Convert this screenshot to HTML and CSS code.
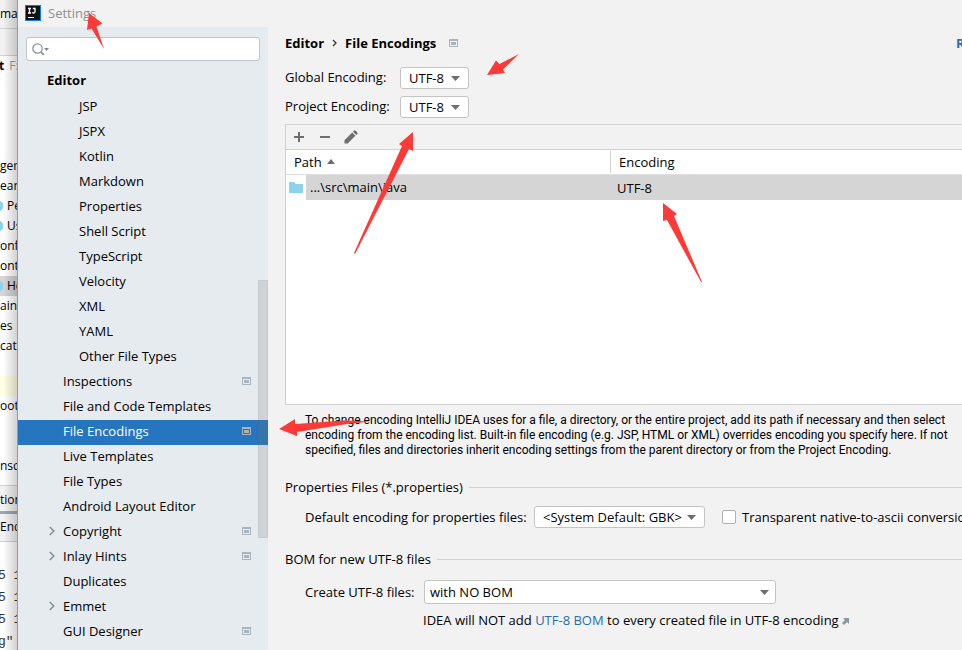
FILE: index.html
```html
<!DOCTYPE html>
<html lang="en">
<head>
<meta charset="utf-8">
<title>Settings</title>
<link rel="stylesheet" href="styles.css">
</head>
<body>
<svg class="defs" aria-hidden="true">
  <symbol id="scope" viewBox="0 0 9 8"><path fill="#a9b5bd" fill-rule="evenodd" d="M0 0h9v8H0zM1 2v5h7V2zM2 3h5v3H2z"/></symbol>
  <symbol id="chevron" viewBox="0 0 6 10"><path fill="none" stroke="#8a8d90" stroke-width="1.5" d="M.8 1l4 4-4 4"/></symbol>
  <symbol id="down" viewBox="0 0 9 5"><path fill="#6e6e6e" d="M0 0h9L4.500 5z"/></symbol>
</svg>
<div class="desktop">
  <aside class="ide">
    <div class="ide-menu">mai</div>
    <div class="ide-nav"></div>
    <div class="ide-project"><b>t</b><span>F:</span></div>
    <ul class="ide-tree">
      <li>ger</li>
      <li>ean</li>
      <li class="cls">Pe</li>
      <li class="cls">Us</li>
      <li>onfi</li>
      <li>ontr</li>
      <li class="cls current">He</li>
      <li>ain</li>
      <li>es</li>
      <li>cat</li>
      <li></li>
      <li class="marked"></li>
      <li>oot.</li>
      <li></li>
      <li></li>
      <li>nsc</li>
    </ul>
    <div class="ide-tab">tion</div>
    <div class="ide-tool">End</div>
    <pre class="ide-log">5 1
5 1
5 1
g"</pre>
  </aside>
  <div class="dialog">
    <header class="titlebar">
      <svg width="16" height="16" viewBox="0 0 16 16"><path fill="#087cfa" d="M0 0h16v16H0z"/><path fill="#111" d="M1 1h14v14H1z"/><path fill="none" stroke="#fff" stroke-width="1.300" d="M3 3.500h3M4.500 3.500v4.500M3 8h3M7.800 3.500H10v3q0 1.500-1.300 1.500-.8 0-1.400-.7"/><path fill="#fff" d="M3 12h6v1H3z"/></svg>
      <span>Settings</span>
    </header>
    <div class="body">
      <nav class="sidebar">
        <label class="search">
          <svg width="17" height="13" viewBox="0 0 17 13"><circle cx="5.500" cy="5.500" r="4.700" fill="none" stroke="#8c959b" stroke-width="1.300"/><path stroke="#8c959b" stroke-width="1.800" d="M8.800 8.800l3 3"/><path fill="#7f8b91" d="M12 5h5l-2.500 3z"/></svg>
          <input type="text" aria-label="Search settings">
        </label>
        <h2>Editor</h2>
        <ul class="tree">
          <li class="sub">JSP</li>
          <li class="sub">JSPX</li>
          <li class="sub">Kotlin</li>
          <li class="sub">Markdown</li>
          <li class="sub">Properties</li>
          <li class="sub">Shell Script</li>
          <li class="sub">TypeScript</li>
          <li class="sub">Velocity</li>
          <li class="sub">XML</li>
          <li class="sub">YAML</li>
          <li class="sub">Other File Types</li>
          <li>Inspections<svg class="scope"><use href="#scope"/></svg></li>
          <li>File and Code Templates</li>
          <li class="selected">File Encodings<svg class="scope"><use href="#scope"/></svg></li>
          <li>Live Templates</li>
          <li>File Types</li>
          <li>Android Layout Editor</li>
          <li class="folded"><svg class="chevron"><use href="#chevron"/></svg>Copyright<svg class="scope"><use href="#scope"/></svg></li>
          <li class="folded"><svg class="chevron"><use href="#chevron"/></svg>Inlay Hints<svg class="scope"><use href="#scope"/></svg></li>
          <li>Duplicates</li>
          <li class="folded"><svg class="chevron"><use href="#chevron"/></svg>Emmet</li>
          <li>GUI Designer<svg class="scope"><use href="#scope"/></svg></li>
        </ul>
        <div class="thumb"></div>
      </nav>
      <main class="page">
        <div class="crumbs">
          <b>Editor</b>
          <svg width="5" height="8" viewBox="0 0 5 8"><path fill="none" stroke="#333" stroke-width="1.300" d="M1 1l3 3-3 3"/></svg>
          <b>File Encodings</b>
          <svg class="scope"><use href="#scope"/></svg>
          <a class="reset" href="#">Reset</a>
        </div>
        <div class="field">
          <label for="global">Global Encoding:</label>
          <span class="combo small"><select id="global"><option>UTF-8</option></select><svg><use href="#down"/></svg></span>
        </div>
        <div class="field">
          <label for="project">Project Encoding:</label>
          <span class="combo small"><select id="project"><option>UTF-8</option></select><svg><use href="#down"/></svg></span>
        </div>
        <section class="panel">
          <div class="toolbar">
            <button aria-label="Add"><svg width="14" height="14" viewBox="0 0 14 14"><path stroke="#6e6e6e" stroke-width="2" d="M7 2v10M2 7h10"/></svg></button>
            <button aria-label="Remove"><svg width="14" height="14" viewBox="0 0 14 14"><path stroke="#6e6e6e" stroke-width="2" d="M2 7h10"/></svg></button>
            <button aria-label="Edit"><svg width="14" height="14" viewBox="0 0 14 14"><path fill="#6e6e6e" d="M.5 13.500v-3.300L8.200 2.600l3.200 3.200-7.700 7.700zM9 1.800L10.200.6q.6-.6 1.200 0l2 2q.6.6 0 1.200L12.200 5z"/></svg></button>
          </div>
          <table>
            <thead><tr><th class="path">Path <svg width="8" height="5" viewBox="0 0 8 5"><path fill="#6e6e6e" d="M0 5h8L4 0z"/></svg></th><th><span>Encoding</span></th></tr></thead>
            <tbody><tr><td class="path"><div><svg width="14" height="11" viewBox="0 0 14 11"><path fill="#8dd3ec" d="M0 0h5l2 2h7v9H0z"/></svg><span>...\src\main\java</span></div></td><td>UTF-8</td></tr></tbody>
          </table>
        </section>
        <p class="help">To change encoding IntelliJ IDEA uses for a file, a directory, or the entire project, add its path if necessary and then select<br>encoding from the encoding list. Built-in file encoding (e.g. JSP, HTML or XML) overrides encoding you specify here. If not<br>specified, files and directories inherit encoding settings from the parent directory or from the Project Encoding.</p>
        <h3>Properties Files (*.properties)</h3>
        <div class="row">
          <label class="default-label" for="props">Default encoding for properties files:</label>
          <span class="combo medium"><select id="props"><option>&lt;System Default: GBK&gt;</option></select><svg><use href="#down"/></svg></span>
          <input class="check" type="checkbox" id="ascii"><label for="ascii">Transparent native-to-ascii conversion</label>
        </div>
        <h3>BOM for new UTF-8 files</h3>
        <div class="row bom">
          <label class="bom-label" for="bom">Create UTF-8 files:</label>
          <span class="combo large"><select id="bom"><option>with NO BOM</option></select><svg><use href="#down"/></svg></span>
        </div>
        <p class="hint">IDEA will NOT add <a href="#">UTF-8 BOM</a> to every created file in UTF-8 encoding <svg width="7" height="7" viewBox="0 0 7 7"><path fill="#8a979f" d="M1 0h6v6L5 4 2 7 0 5l3-3z"/></svg></p>
      </main>
    </div>
  </div>
</div>
<svg class="arrows" width="720" height="450" viewBox="0 0 720 450" aria-hidden="true">
  <path d="M89 13l13.500 10.500-6 3L104 49 91.500 28.500 87 30z"/>
  <path d="M487 75l9-14.500 3.500 3.500L519 54l-16 15.500 2 3.500z"/>
  <path d="M413 132v19l-4-2-54 105-1-1 48-107-3-2z"/>
  <path d="M663 203l14 11-3 2 28 66-1 0-34-62-4 1z"/>
  <path d="M279 429l16-10v5l50-3.500 26 1-24 2.500-50 8v4z"/>
</svg>
</body>
</html>
```
FILE: styles.css
```css
* { box-sizing: border-box; }
body {
  margin: 0;
  background: #f2f2f2;
  color: #000;
  font: 13px/16px "Open Sans", "Noto Sans", sans-serif;
}
ul { margin: 0; padding: 0; list-style: none; }
a { color: #2470b3; text-decoration: none; }
svg { flex: none; }
.defs { position: absolute; width: 0; height: 0; }
.desktop { position: relative; display: grid; grid-template-columns: 18px minmax(0, 1fr); height: 100vh; overflow: hidden; }

.ide { position: relative; overflow: hidden; background: #fff; border-right: 1px solid #9b9b9b; white-space: nowrap; font-size: 12px; }
.ide::after { content: ""; position: absolute; inset: 0; background: linear-gradient(to right, transparent 20%, rgba(0, 0, 0, .18)); }
.ide-menu { height: 29px; padding-top: 6px; background: #f2f2f2; border-bottom: 1px solid #d1d1d1; }
.ide-nav { height: 27px; background: #f2f2f2; border-bottom: 1px solid #d1d1d1; }
.ide-project { display: flex; gap: 5px; height: 100px; color: #999; line-height: 20px; margin-left: -1px; }
.ide-project b { color: #000; }
.ide-tree li { height: 20px; line-height: 20px; }
.ide-tree .cls { padding-left: 7px; background: radial-gradient(circle at -4px 10px, #8cd3ee 7px, transparent 7px); }
.ide-tree .current { background-color: #d5d5d5; }
.ide-tree .marked { background: #ffffe4; }
.ide-tab { height: 29px; margin-top: 9px; line-height: 28px; background: #f2f2f2; border-top: 1px solid #d1d1d1; border-bottom: 3px solid #9aa7b8; }
.ide-tool { height: 28px; line-height: 26px; background: #f2f2f2; border-bottom: 1px solid #d1d1d1; }
.ide-log { margin: 23px 0 0 -2px; color: #333; font: 13px/22px "Liberation Mono", monospace; }

.dialog { display: flex; flex-direction: column; min-width: 0; min-height: 0; background: #f2f2f2; }
.titlebar { display: flex; align-items: center; gap: 7px; height: 27px; padding: 0 0 2px 7px; color: #8f8f8f; flex: none; }
.body { display: flex; flex: 1; min-height: 0; }
.sidebar { position: relative; flex: none; width: 250px; padding-top: 10px; background: #e6ebef; overflow: hidden; }
.search { display: flex; align-items: center; gap: 4px; height: 24px; margin: 0 8px; padding: 0 5px; background: #fff; border: 1px solid #c4c4c4; border-radius: 3px; }
.search input { flex: 1; min-width: 0; border: 0; outline: 0; background: none; font: inherit; }
h2 { margin: 6px 0 0; padding-left: 29px; height: 28px; font-size: 13px; line-height: 26px; }
.tree li { display: flex; align-items: center; height: 25px; padding: 0 17px 3px 45px; }
.tree .sub { padding-left: 61px; }
.tree .folded { padding-left: 31px; }
.tree .selected { background: #2675bf; color: #fff; }
.scope { width: 9px; height: 8px; }
.tree .scope { margin-left: auto; }
.chevron { width: 6px; height: 10px; margin-right: 8px; }
.thumb { position: absolute; right: 0; top: 253px; width: 10px; height: 258px; background: rgba(115, 115, 115, .2); border: 1px solid rgba(89, 89, 89, .06); }

.page { flex: 1; min-width: 0; padding: 8px 0 0 17px; overflow: hidden; white-space: nowrap; }
.crumbs { display: flex; align-items: center; gap: 8px; height: 16px; margin-bottom: 16px; }
.crumbs .scope { margin-left: 5px; }
.reset { margin-left: auto; margin-right: -30px; font-weight: bold; }
.field { display: flex; align-items: center; height: 22px; margin-bottom: 7px; }
.field label { width: 115px; padding-bottom: 2px; }
.combo { position: relative; display: flex; flex: none; }
.combo select { width: 100%; height: 22px; padding: 0 8px; appearance: none; background: #fff; border: 1px solid #c4c4c4; border-radius: 3px; color: #000; font: inherit; }
.combo svg { position: absolute; right: 9px; top: 50%; width: 9px; height: 5px; margin-top: -2px; pointer-events: none; }
.small { width: 69px; }
.medium { width: 171px; }
.large { width: 352px; }
.large select { height: 24px; padding: 0 5px; }
.large svg { right: 7px; }

.panel { height: 281px; margin-top: -1px; background: #fff; border: 1px solid #d1d1d1; border-right: 0; }
.toolbar { display: flex; align-items: center; gap: 12px; height: 25px; padding-left: 6px; background: #f2f2f2; border-bottom: 1px solid #d1d1d1; }
.toolbar button { display: flex; padding: 0; border: 0; background: none; }
table { width: 100%; border-spacing: 0; table-layout: fixed; }
th, td { height: 25px; padding: 0; text-align: left; font-weight: normal; }
th { border-bottom: 1px solid #e0e0e0; }
th.path { width: 324px; padding-left: 8px; }
th svg { margin: 0 0 3px 2px; }
th span { display: block; padding-left: 8px; border-left: 1px solid #d1d1d1; line-height: 22px; }
td { padding-left: 7px; background: #d5d5d5; }
td.path { padding: 0; }
td div { display: flex; align-items: center; height: 25px; padding-left: 3px; background: #fff; }
td div span { flex: 1; margin-left: 3px; padding-left: 4px; background: #d5d5d5; line-height: 25px; }
.help { margin: 8px 0 0; padding-left: 20px; font: 12px/15px Roboto, "Open Sans", sans-serif; }
h3 { display: flex; align-items: center; gap: 6px; margin: 20px 0 0; height: 18px; font-size: 13px; font-weight: normal; }
h3::after { content: ""; flex: 1; height: 1px; background: #d1d1d1; }
.row { display: flex; align-items: center; margin-top: 10px; padding-left: 20px; }
.row + h3 { margin-top: 22px; }
.default-label { flex: none; width: 229px; }
.bom-label { flex: none; width: 119px; }
.check { flex: none; width: 14px; height: 14px; margin: 0 6px 0 17px; appearance: none; background: #fff; border: 1px solid #b0b0b0; border-radius: 2px; }
.row.bom { margin-top: 12px; }
.hint { margin: 8px 0 0; padding-left: 138px; }
.arrows { position: absolute; top: 0; left: 0; fill: #fe3a39; pointer-events: none; }
```
